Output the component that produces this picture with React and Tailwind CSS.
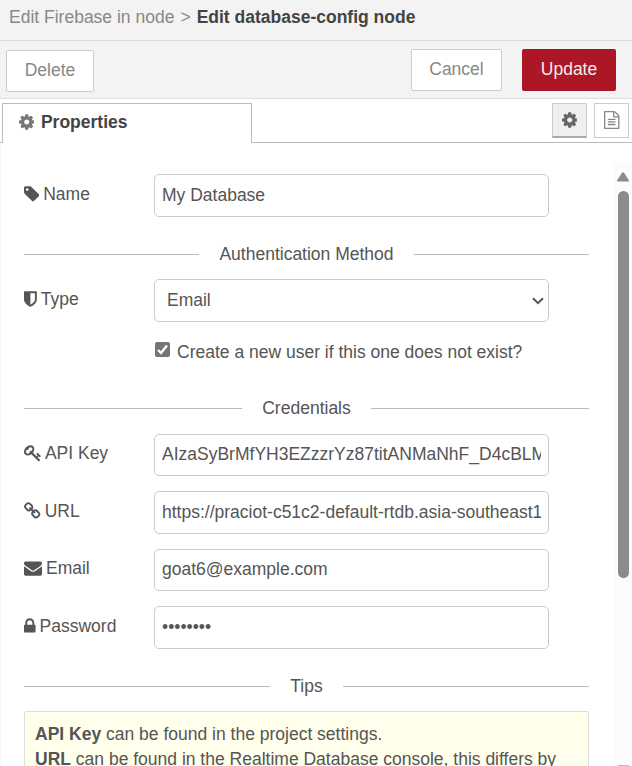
import React from "react";

const icons = {
  cog: [128, 1536, "M1152 896q0-106-75-181t-181-75-181 75-75 181 75 181 181 75 181-75 75-181zm512-109v222q0 12-8 23t-20 13l-185 28q-19 54-39 91 35 50 107 138 10 12 10 25t-9 23q-27 37-99 108t-94 71q-12 0-26-9l-138-108q-44 23-91 38-16 136-29 186-7 28-36 28h-222q-14 0-24.5-8.5t-11.5-21.5l-28-184q-49-16-90-37l-141 107q-10 9-25 9-14 0-25-11-126-114-165-168-7-10-7-23 0-12 8-23 15-21 51-66.5t54-70.5q-27-50-41-99l-183-27q-13-2-21-12.5t-8-23.5v-222q0-12 8-23t19-13l186-28q14-46 39-92-40-57-107-138-10-12-10-24 0-10 9-23 26-36 98.5-107.5t94.5-71.5q13 0 26 10l138 107q44-23 91-38 16-136 29-186 7-28 36-28h222q14 0 24.5 8.5t11.5 21.5l28 184q49 16 90 37l142-107q9-9 24-9 13 0 25 10 129 119 165 170 7 8 7 22 0 12-8 23-15 21-51 66.5t-54 70.5q26 50 41 98l183 28q13 2 21 12.5t8 23.5z"],
  file: [128, 1536, "M1596 380q28 28 48 76t20 88v1152q0 40-28 68t-68 28h-1344q-40 0-68-28t-28-68v-1600q0-40 28-68t68-28h896q40 0 88 20t76 48zm-444-244v376h376q-10-29-22-41l-313-313q-12-12-41-22zm384 1528v-1024h-416q-40 0-68-28t-28-68v-416h-768v1536h1280zm-1024-864q0-14 9-23t23-9h704q14 0 23 9t9 23v64q0 14-9 23t-23 9h-704q-14 0-23-9t-9-23v-64zm736 224q14 0 23 9t9 23v64q0 14-9 23t-23 9h-704q-14 0-23-9t-9-23v-64q0-14 9-23t23-9h704zm0 256q14 0 23 9t9 23v64q0 14-9 23t-23 9h-704q-14 0-23-9t-9-23v-64q0-14 9-23t23-9h704z"],
  tag: [128, 1515, "M576 448q0-53-37.5-90.5t-90.5-37.5-90.5 37.5-37.5 90.5 37.5 90.5 90.5 37.5 90.5-37.5 37.5-90.5zm1067 576q0 53-37 90l-491 492q-39 37-91 37-53 0-90-37l-715-716q-38-37-64.5-101t-26.5-117v-416q0-52 38-90t90-38h416q53 0 117 26.5t102 64.5l715 714q37 39 37 91z"],
  shield: [256, 1280, "M1344 960v-640h-448v1137q119-63 213-137 235-184 235-360zm192-768v768q0 86-33.5 170.5t-83 150-118 127.5-126.5 103-121 77.5-89.5 49.5-42.5 20q-12 6-26 6t-26-6q-16-7-42.5-20t-89.5-49.5-121-77.5-126.5-103-118-127.5-83-150-33.5-170.5v-768q0-26 19-45t45-19h1152q26 0 45 19t19 45z"],
  key: [0, 1683, "M832 512q0-80-56-136t-136-56-136 56-56 136q0 42 19 83-41-19-83-19-80 0-136 56t-56 136 56 136 136 56 136-56 56-136q0-42-19-83 41 19 83 19 80 0 136-56t56-136zm851 704q0 17-49 66t-66 49q-9 0-28.5-16t-36.5-33-38.5-40-24.5-26l-96 96 220 220q28 28 28 68 0 42-39 81t-81 39q-40 0-68-28l-671-671q-176 131-365 131-163 0-265.5-102.5t-102.5-265.5q0-160 95-313t248-248 313-95q163 0 265.5 102.5t102.5 265.5q0 189-131 365l355 355 96-96q-3-3-26-24.5t-40-38.5-33-36.5-16-28.5q0-17 49-66t66-49q13 0 23 10 6 6 46 44.5t82 79.5 86.5 86 73 78 28.5 41z"],
  link: [80, 1664, "M1520 1216q0-40-28-68l-208-208q-28-28-68-28-42 0-72 32 3 3 19 18.5t21.5 21.5 15 19 13 25.5 3.5 27.5q0 40-28 68t-68 28q-15 0-27.5-3.5t-25.5-13-19-15-21.5-21.5-18.5-19q-33 31-33 73 0 40 28 68l206 207q27 27 68 27 40 0 68-26l147-146q28-28 28-67zm-703-705q0-40-28-68l-206-207q-28-28-68-28-39 0-68 27l-147 146q-28 28-28 67 0 40 28 68l208 208q27 27 68 27 42 0 72-31-3-3-19-18.5t-21.5-21.5-15-19-13-25.5-3.5-27.5q0-40 28-68t68-28q15 0 27.5 3.5t25.5 13 19 15 21.5 21.5 18.5 19q33-31 33-73zm895 705q0 120-85 203l-147 146q-83 83-203 83-121 0-204-85l-206-207q-83-83-83-203 0-123 88-209l-88-88q-86 88-208 88-120 0-204-84l-208-208q-84-84-84-204t85-203l147-146q83-83 203-83 121 0 204 85l206 207q83 83 83 203 0 123-88 209l88 88q86-88 208-88 120 0 204 84l208 208q84 84 84 204z"],
  envelope: [0, 1792, "M1792 710v794q0 66-47 113t-113 47h-1472q-66 0-113-47t-47-113v-794q44 49 101 87 362 246 497 345 57 42 92.5 65.5t94.5 48 110 24.5h2q51 0 110-24.5t94.5-48 92.5-65.5q170-123 498-345 57-39 100-87zm0-294q0 79-49 151t-122 123q-376 261-468 325-10 7-42.5 30.5t-54 38-52 32.5-57.5 27-50 9h-2q-23 0-50-9t-57.5-27-52-32.5-54-38-42.5-30.5q-91-64-262-182.5t-205-142.5q-62-42-117-115.5t-55-136.5q0-78 41.5-130t118.5-52h1472q65 0 112.5 47t47.5 113z"],
  lock: [320, 1152, "M640 768h512v-192q0-106-75-181t-181-75-181 75-75 181v192zm832 96v576q0 40-28 68t-68 28h-960q-40 0-68-28t-28-68v-576q0-40 28-68t68-28h32v-192q0-184 132-316t316-132 316 132 132 316v192h32q40 0 68 28t28 68z"],
};

function Icon({ name, className = "" }) {
  const [x, w, d] = icons[name];
  return (
    <svg viewBox={`${x} 0 ${w} 1792`} className={`h-[18px] w-auto shrink-0 fill-current ${className}`}>
      <path d={d} />
    </svg>
  );
}

function Row({ icon, label, className = "", labelHeight = "h-10", children }) {
  return (
    <div className={`flex ${className}`}>
      <label className={`flex w-[130px] shrink-0 items-center gap-1 ${labelHeight}`}>
        <Icon name={icon} />
        <span>{label}</span>
      </label>
      {children}
    </div>
  );
}

function Field({ value, type = "text", className = "h-[43px]" }) {
  return (
    <input
      type={type}
      defaultValue={value}
      className={`w-[395px] rounded-[5px] border border-[#ccc] bg-white px-[7px] text-[#555] outline-none ${className}`}
    />
  );
}

function Divider({ children, className = "" }) {
  return (
    <div className={`flex h-[25px] items-center gap-5 ${className}`}>
      <div className="h-px flex-1 bg-[#bbb]" />
      <span>{children}</span>
      <div className="h-px flex-1 bg-[#bbb]" />
    </div>
  );
}

export default function App() {
  return (
    <div className="flex h-[766px] w-[632px] flex-col overflow-hidden bg-white font-['Liberation_Sans',Arial,sans-serif] text-[17.5px] leading-[25px] text-[#555]">
      <header className="flex h-[41px] shrink-0 gap-[6px] border-b border-[#ddd] bg-[#f3f3f3] pt-[5px] pl-[9px] whitespace-nowrap text-[#888]">
        <span>Edit Firebase in node</span>
        <span>&gt;</span>
        <span className="font-bold text-[#444]">Edit database-config node</span>
      </header>

      <div className="flex h-[58px] shrink-0 items-start border-b border-[#ddd] bg-[#f3f3f3] pt-2 pr-4 pl-[6px]">
        <button className="mt-px h-[42px] w-[88px] rounded-[2px] border border-[#ccc] bg-white pb-[2px] text-[#888]">Delete</button>
        <button className="ml-auto h-[42px] w-[91px] rounded-[2px] border border-[#ccc] bg-white pb-[2px] text-[#888]">Cancel</button>
        <button className="ml-5 h-[42px] w-[94px] rounded-[2px] bg-[#ad1625] pb-[2px] text-[#eee]">Update</button>
      </div>

      <div className="flex h-11 shrink-0 pt-1">
        <div className="w-[2px] border-b border-[#bbb]" />
        <div className="flex w-[250px] items-center gap-[7px] border border-b-0 border-[#bbb] pb-[2px] pl-[15.5px] font-bold text-[#444]">
          <Icon name="cog" className="mb-[2px] text-[#777]" />
          <span>Properties</span>
        </div>
        <div className="flex flex-1 justify-end gap-[7px] border-b border-[#bbb] pr-[3px]">
          <button className="flex h-[35px] w-[35px] items-center justify-center border border-b-2 border-[#ccc] border-b-[#aaa] bg-[#efefef] text-[#666]">
            <Icon name="cog" />
          </button>
          <button className="flex h-[35px] w-[35px] items-center justify-center border border-[#ccc] pb-px pl-px text-[#888]">
            <Icon name="file" />
          </button>
        </div>
      </div>

      <div className="flex min-h-0 flex-1 border-l border-[#f7f7f7]">
        <main className="w-[613px] shrink-0 overflow-hidden pt-[31px] pr-[25px] pl-[23px]">
          <Row icon="tag" label="Name">
            <Field value="My Database" />
          </Row>
          <Divider className="mt-[25px]">Authentication Method</Divider>
          <Row icon="shield" label="Type" className="mt-3">
            <div className="flex h-[43px] w-[395px] items-center justify-between rounded-[5px] border border-[#ccc] pr-[4px] pl-3">
              <span>Email</span>
              <svg viewBox="0 0 12 8" className="h-2 w-3 fill-none stroke-[#555] stroke-2">
                <path d="M1 1.2l5 5 5-5" />
              </svg>
            </div>
          </Row>
          <label className="mt-[18px] ml-[131px] flex h-[25px] items-center gap-[7px]">
            <span className="mb-[6px] flex h-[15px] w-[15px] items-center justify-center rounded-[2px] bg-[#757575]">
              <svg viewBox="0 0 15 15" className="h-[15px] w-[15px] fill-none stroke-white stroke-[2.4]">
                <path d="M3 8l3 3 6-7.6" />
              </svg>
            </span>
            <span>Create a new user if this one does not exist?</span>
          </label>
          <Divider className="mt-[31px]">Credentials</Divider>
          <Row icon="key" label="API Key" className="mt-[13px]" labelHeight="h-[38px]">
            <Field value="AIzaSyBrMfYH3EZzzrYz87titANMaNhF_D4cBLMx" className="h-[42px] pb-[2px]" />
          </Row>
          <Row icon="link" label="URL" className="mt-[15px]">
            <Field value="https://praciot-c51c2-default-rtdb.asia-southeast1" />
          </Row>
          <Row icon="envelope" label="Email" className="mt-[15px]" labelHeight="h-[38px]">
            <Field value="goat6@example.com" className="h-[42px] pb-[2px]" />
          </Row>
          <Row icon="lock" label="Password" className="mt-[15px]">
            <Field type="password" value="password" />
          </Row>
          <Divider className="mt-[25px]">Tips</Divider>
          <div className="mt-3 h-[120px] rounded-[2px] border border-[#ddd] bg-[#ffffec] px-[10px] pt-[10px] whitespace-nowrap">
            <p><b>API Key</b> can be found in the project settings.</p>
            <p><b>URL</b> can be found in the Realtime Database console, this differs by</p>
          </div>
        </main>
        <div className="mt-[19px] flex flex-1 flex-col items-center bg-[#fcfcfc] pt-[10px]">
          <svg viewBox="0 0 12 10" className="h-[10px] w-3 shrink-0 fill-[#8b8b8b]">
            <path d="M5 .8Q6-.5 7 .8L11.7 8Q12.4 9.6 11 9.6H1Q-.4 9.6.3 8z" />
          </svg>
          <div className="mt-[9px] h-[387px] w-[11px] shrink-0 rounded-full bg-[#8b8b8b]" />
          <div className="mt-[187px] h-px w-[11px] shrink-0 bg-[#bbb]" />
        </div>
      </div>
    </div>
  );
}
